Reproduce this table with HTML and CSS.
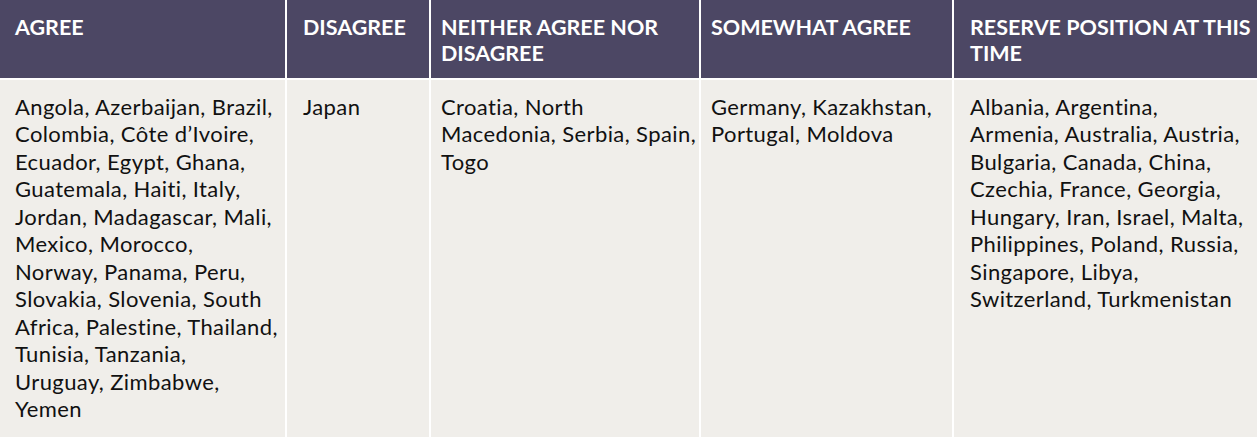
FILE: index.html
```html
<!DOCTYPE html>
<html lang="en">
<head>
<meta charset="utf-8">
<title>Positions</title>
<link rel="stylesheet" href="styles.css">
</head>
<body>
<div class="table">
  <div class="th c1">AGREE</div>
  <div class="th c2">DISAGREE</div>
  <div class="th c3">NEITHER AGREE NOR DISAGREE</div>
  <div class="th c4">SOMEWHAT AGREE</div>
  <div class="th c5">RESERVE POSITION AT THIS TIME</div>
  <div class="td c1">Angola, Azerbaijan, Brazil, Colombia, Côte d’Ivoire, Ecuador, Egypt, Ghana, Guatemala, Haiti, Italy, Jordan, Madagascar, Mali, Mexico, Morocco, Norway, Panama, Peru, Slovakia, Slovenia, South Africa, Palestine, Thailand, Tunisia, Tanzania, Uruguay, Zimbabwe, Yemen</div>
  <div class="td c2">Japan</div>
  <div class="td c3">Croatia, North Macedonia, Serbia, Spain, Togo</div>
  <div class="td c4">Germany, Kazakhstan, Portugal, Moldova</div>
  <div class="td c5">Albania, Argentina, Armenia, Australia, Austria, Bulgaria, Canada, China, Czechia, France, Georgia, Hungary, Iran, Israel, Malta, Philippines, Poland, Russia, Singapore, Libya, Switzerland, Turkmenistan</div>
</div>
</body>
</html>
```
FILE: styles.css
```css
html, body {
  margin: 0;
  padding: 0;
  background: #ffffff;
}
body {
  font-family: Lato, "Open Sans", sans-serif;
  font-variant-ligatures: none;
  height: 437px;
  overflow: hidden;
}
.table {
  display: grid;
  grid-template-columns: 285px 142px 268px 251px 1fr;
  grid-template-rows: 78px 360px;
  column-gap: 2px;
  row-gap: 2px;
  width: 1257px;
}
.th {
  background: #4c4764;
  color: #ffffff;
  font-weight: 700;
  font-size: 21.5px;
  line-height: 26px;
  padding-top: 14px;
  padding-right: 4px;
}
.td {
  background: #f0eeea;
  color: #111111;
  font-size: 22px;
  letter-spacing: 0.4px;
  line-height: 27.5px;
  padding-top: 12.5px;
}
.c1 { padding-left: 15px; }
.c2 { padding-left: 16px; }
.c3 { padding-left: 10px; }
.c4 { padding-left: 10px; }
.c5 { padding-left: 16px; }
.td.c1 { padding-right: 5px; }
.td.c2 { padding-right: 4px; }
.td.c3 { padding-right: 0; }
.td.c4 { padding-right: 4px; }
.td.c5 { padding-right: 11px; }
```
